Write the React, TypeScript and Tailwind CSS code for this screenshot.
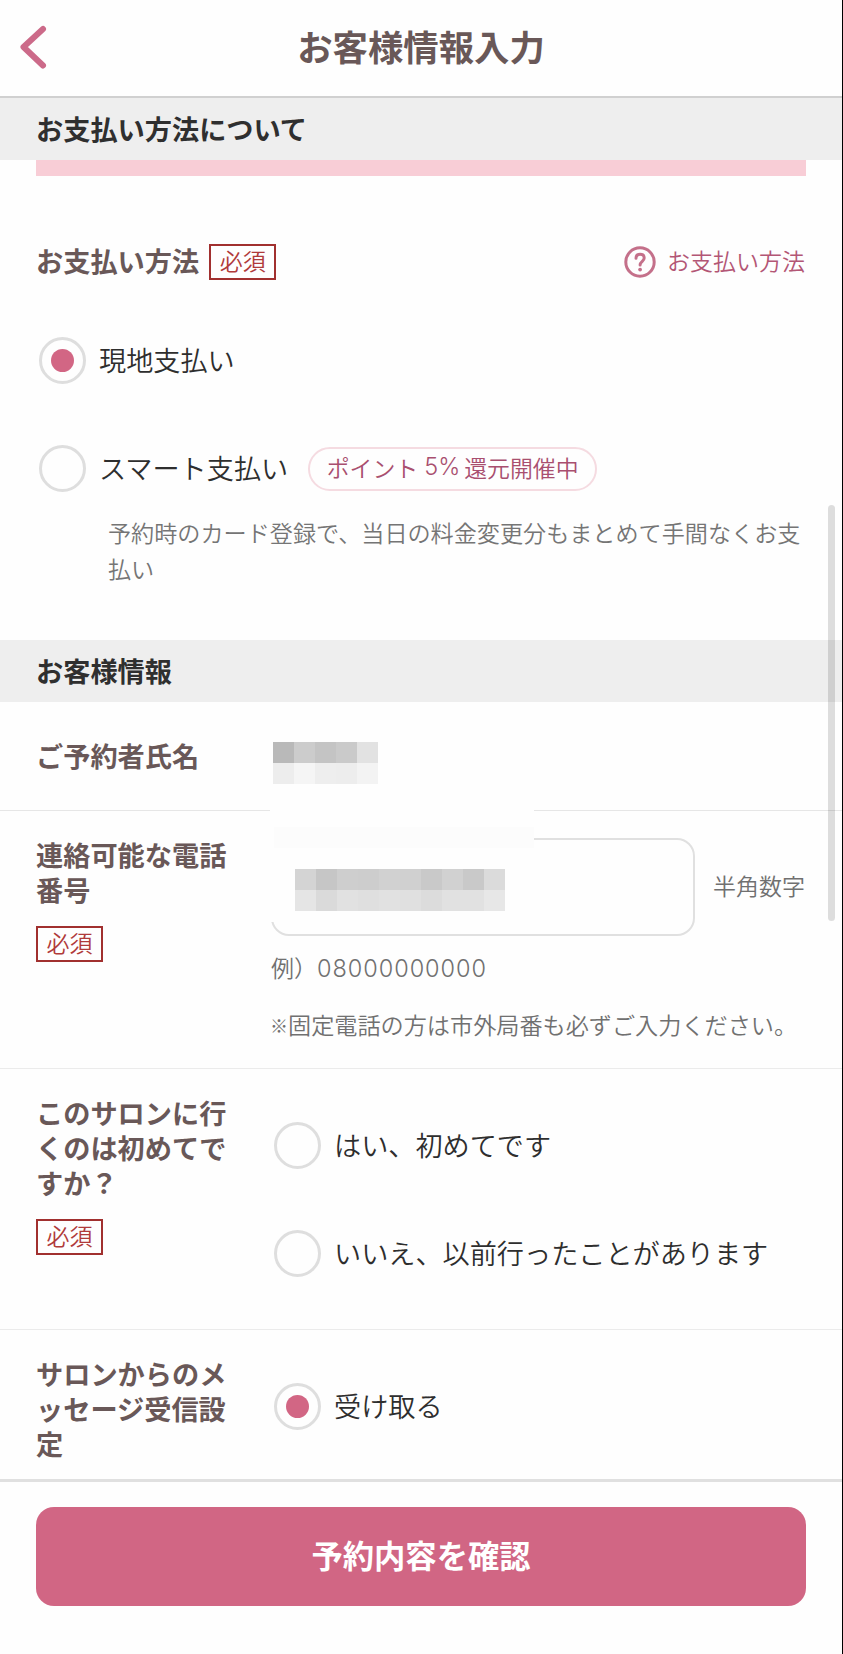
import type { ReactNode } from 'react';

const nameMosaic = [
    ['bg-[#b9b9b9]', 'bg-[#cccccc]', 'bg-[#c4c4c4]', 'bg-[#cacaca]', 'bg-[#e2e2e2]'],
    ['bg-[#ededed]', 'bg-[#f5f5f5]', 'bg-[#eeeeee]', 'bg-[#ededed]', 'bg-[#f3f3f3]'],
];

const phoneMosaic = [
    ['bg-[#d4d4d4]', 'bg-[#c6c6c6]', 'bg-[#cecece]', 'bg-[#cdcdcd]', 'bg-[#d1d1d1]', 'bg-[#d0d0d0]', 'bg-[#c9c9c9]', 'bg-[#d1d1d1]', 'bg-[#c9c9c9]', 'bg-[#dbdbdb]'],
    ['bg-[#e5e5e5]', 'bg-[#dadada]', 'bg-[#e1e1e1]', 'bg-[#dfdfdf]', 'bg-[#e1e1e1]', 'bg-[#e0e0e0]', 'bg-[#dcdcdc]', 'bg-[#e1e1e1]', 'bg-[#e1e1e1]', 'bg-[#e7e7e7]'],
];

function Mosaic({ rows }: { rows: string[][] }) {
    return (
        <div aria-hidden="true">
            {rows.map((row, y) => (
                <div key={y} className="flex">
                    {row.map((color, x) => (
                        <span key={x} className={`h-[21px] w-[21px] ${color}`} />
                    ))}
                </div>
            ))}
        </div>
    );
}

function SectionTitle({ children }: { children: ReactNode }) {
    return (
        <h2 className="flex h-[62px] items-center bg-[#eeeeee] px-9 pb-px text-[27.2px] leading-none font-bold text-[#2f2f2f]">
            {children}
        </h2>
    );
}

function Required() {
    return (
        <span className="flex h-9 w-[67px] shrink-0 items-center justify-center border-2 border-[#a1302f] pb-[3px] text-[23px] leading-none font-[350] text-[#b03a3a]">
            必須
        </span>
    );
}

function Radio({ label, checked = false, children }: { label: string; checked?: boolean; children?: ReactNode }) {
    return (
        <div className="flex h-[47px] items-center">
            <span className="flex h-[47px] w-[47px] shrink-0 items-center justify-center rounded-full border-3 border-[#dedede]">
                {checked && <span className="h-[23px] w-[23px] rounded-full bg-[#d26684]" />}
            </span>
            <span className="ml-[13px] pb-px text-[27.15px] leading-none font-[350] whitespace-nowrap text-[#2e2e2e]">{label}</span>
            {children}
        </div>
    );
}

function RowLabel({ text, required = false }: { text: string; required?: boolean }) {
    return (
        <div className="w-[235px] shrink-0">
            <p className="w-[194px] text-[27.2px] leading-[35px] font-bold break-all text-[#695858]">{text}</p>
            {required && <div className="mt-[19px]"><Required /></div>}
        </div>
    );
}

export default function App() {
    return (
        <div className="relative flex h-[1654px] w-[843px] flex-col overflow-hidden border-r border-black bg-[#fefefe] font-['Noto_Sans_CJK_JP',sans-serif]">
            <header className="relative flex h-[98px] items-center justify-center border-b-2 border-[#d0d0d0] pb-[5px]">
                <svg className="absolute top-6 left-4 h-[46px] w-8" viewBox="0 0 32 46" fill="none" stroke="#cc6a89" strokeWidth="6" strokeLinecap="round" strokeLinejoin="round">
                    <path d="M27 5 7.5 23 27 41.5" />
                </svg>
                <h1 className="text-[35.4px] leading-none font-bold text-[#695858]">お客様情報入力</h1>
            </header>

            <SectionTitle>お支払い方法について</SectionTitle>
            <section className="h-[480px] px-9">
                <div className="h-4 bg-[#f8cdd6]" />
                <div className="mt-[68px] flex h-9 items-center">
                    <h3 className="mr-[10px] pb-[3px] text-[27.2px] leading-none font-bold text-[#695858]">お支払い方法</h3>
                    <Required />
                    <a className="ml-auto flex items-center gap-[11px] text-[23px] leading-none font-[350] text-[#b35675]">
                        <svg className="h-8 w-8" viewBox="0 0 32 32" fill="none" stroke="#c4708a" strokeWidth="3">
                            <circle cx="16" cy="16" r="14.2" />
                            <path d="M12 12.3c0-2.5 1.7-4 4.1-4s4.1 1.5 4.1 3.8c0 3.2-4.1 3.4-4.1 7" strokeLinecap="round" />
                            <circle cx="16.1" cy="23.6" r="1.9" fill="#c4708a" stroke="none" />
                        </svg>
                        <span className="pr-px pb-[3px]">お支払い方法</span>
                    </a>
                </div>
                <div className="mt-[57px] pl-[3px]">
                    <Radio label="現地支払い" checked />
                    <div className="mt-[61px]">
                        <Radio label="スマート支払い">
                            <span className="ml-5 flex h-11 w-[289px] items-center justify-center rounded-full border-2 border-[#f5dbe1] pb-[3px] text-[22.9px] leading-none font-[350] whitespace-nowrap text-[#a94f6f]">
                                ポイント<span className="mr-1 ml-1.5 font-[Inter] text-[23.5px] font-[350]">5%</span>還元開催中
                            </span>
                        </Radio>
                    </div>
                    <p className="mt-[22px] ml-[69px] w-[700px] text-[23.12px] leading-9 font-[350] text-[#757575]">
                        予約時のカード登録で、当日の料金変更分もまとめて手間なくお支払い
                    </p>
                </div>
            </section>

            <SectionTitle>お客様情報</SectionTitle>
            <section className="flex h-[109px] border-b border-[#e6e6e6] pt-9 pl-9">
                <RowLabel text="ご予約者氏名" />
                <div className="pt-1 pl-[2px]">
                    <Mosaic rows={nameMosaic} />
                </div>
            </section>

            <section className="flex h-[258px] border-b border-[#ebebeb] pt-[26px] pr-9 pl-9">
                <RowLabel text="連絡可能な電話番号" required />
                <div className="pt-px text-[23px] font-[350] text-[#707070]">
                    <div className="flex items-center">
                        <div className="relative h-[98px] w-[424px] rounded-[18px] border-2 border-[#e0e0e0]">
                            {/* 個人情報のマスク */}
                            <div className="absolute -top-[33px] -left-[3px] h-[115px] w-[264px] bg-[#fefefe]">
                                <div className="mt-5 ml-1 h-[21px] bg-[#fcfcfc]" />
                                <div className="mt-[21px] ml-[25px]">
                                    <Mosaic rows={phoneMosaic} />
                                </div>
                            </div>
                        </div>
                        <span className="ml-[18px] pb-[3px] leading-none whitespace-nowrap">半角数字</span>
                    </div>
                    <p className="mt-4 flex h-[34px] items-center leading-none">
                        <span className="pb-[3px]">例）</span>
                        <span className="font-[Inter] text-[23.5px] font-[350] tracking-[0.95px]">08000000000</span>
                    </p>
                    <p className="mt-[22px] flex h-[34px] items-center text-[23.15px] leading-none whitespace-nowrap">
                        <span className="-ml-px w-[18px] text-[18px] font-bold">※</span>固定電話の方は市外局番も必ずご入力ください。
                    </p>
                </div>
            </section>

            <section className="flex h-[261px] border-b border-[#ebebeb] pt-[26px] pl-9">
                <RowLabel text="このサロンに行くのは初めてですか？" required />
                <div className="pt-[27px] pl-[3px]">
                    <Radio label="はい、初めてです" />
                    <div className="mt-[61px]">
                        <Radio label="いいえ、以前行ったことがあります" />
                    </div>
                </div>
            </section>

            <section className="flex h-[149px] pt-[26px] pl-9">
                <RowLabel text="サロンからのメッセージ受信設定" />
                <div className="pt-[27px] pl-[3px]">
                    <Radio label="受け取る" checked />
                </div>
            </section>

            <footer className="flex-1 border-t-3 border-[#e0e0e0] px-9 pt-[25px]">
                <button className="flex h-[99px] w-full items-center justify-center rounded-[18px] bg-[#d16684] pb-[3px] text-[31.3px] leading-none font-bold text-white">
                    予約内容を確認
                </button>
            </footer>

            <div className="absolute top-[505px] right-[7px] h-[416px] w-[7px] rounded-full bg-black/13" />
        </div>
    );
}
